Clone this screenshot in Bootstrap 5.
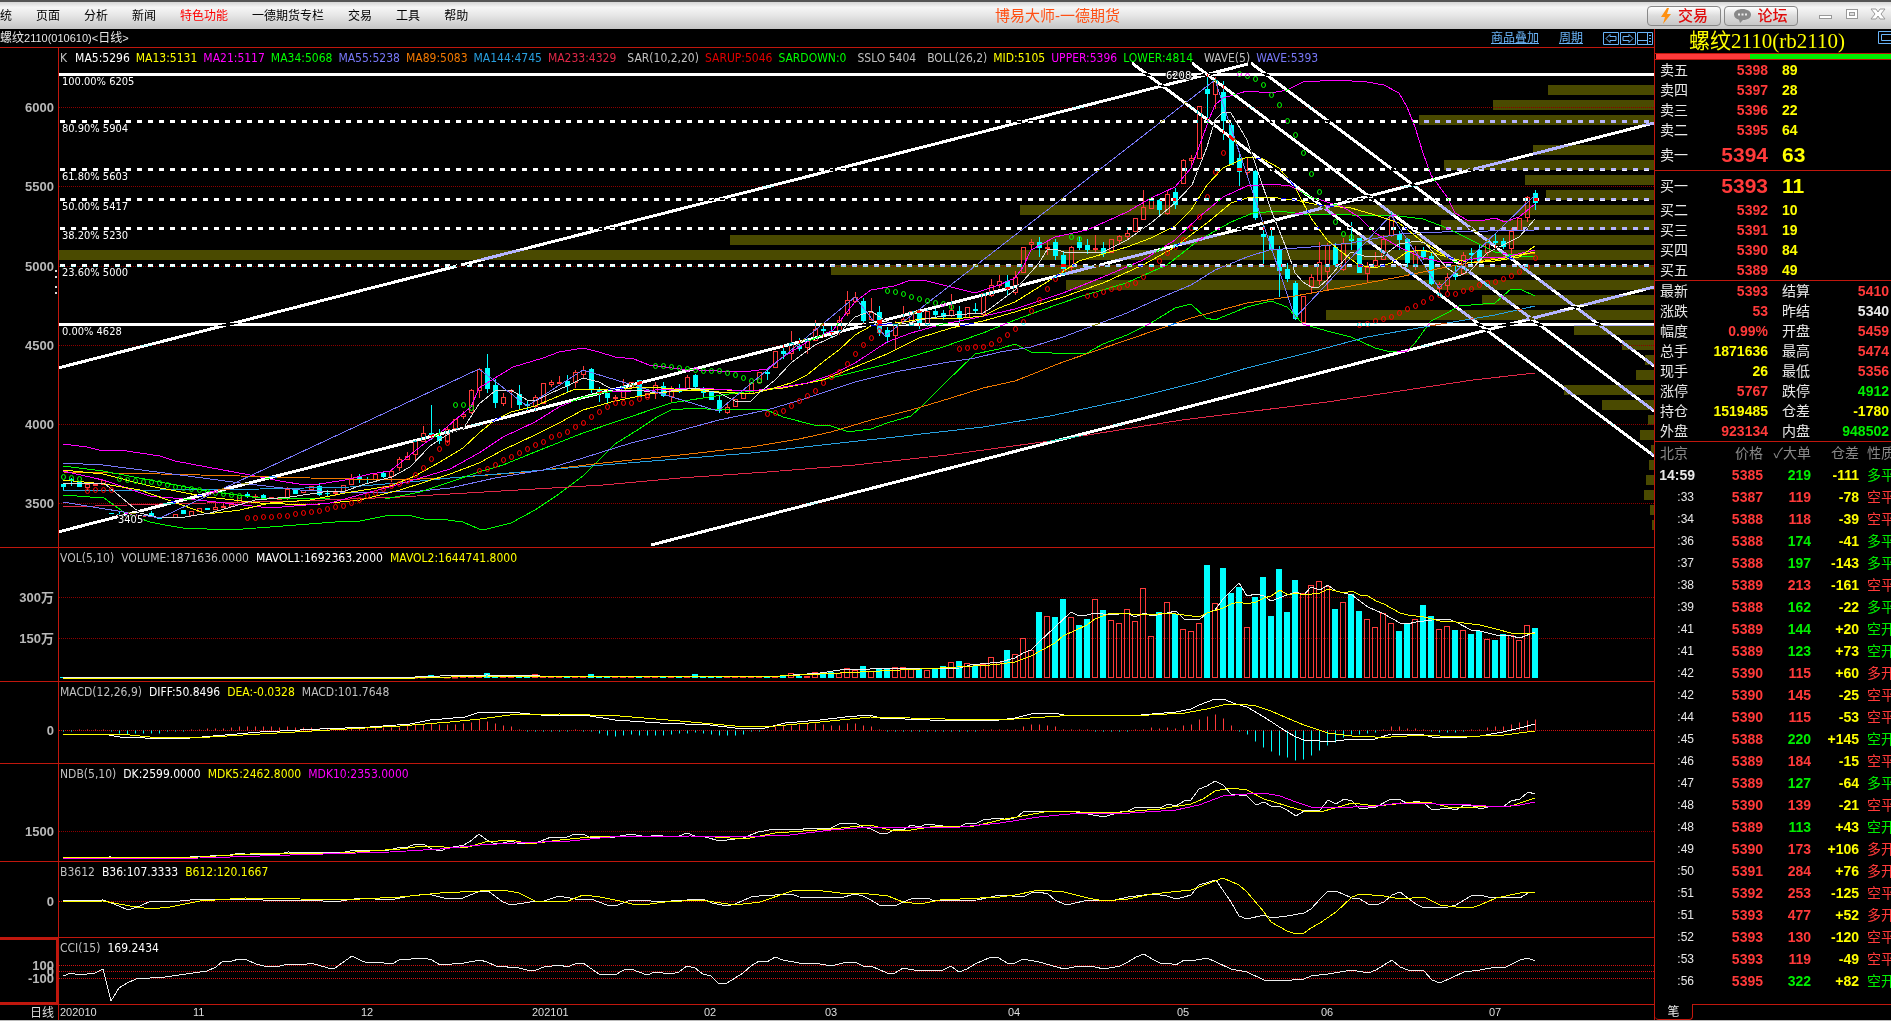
<!DOCTYPE html>
<html lang="zh-CN">
<head>
<meta charset="utf-8">
<meta name="viewport" content="width=device-width, initial-scale=1">
<title>博易大师-一德期货</title>
<link href="https://cdn.jsdelivr.net/npm/bootstrap@5.3.0/dist/css/bootstrap.min.css" rel="stylesheet">
<style>
:root{--line:#c0170d;--up:#ff3a3a;--down:#00ee00;--hot:#ffff00;--pale:#e8e8e8}
body{background:#000;color:var(--pale);font-family:"Liberation Sans","Noto Sans CJK SC",sans-serif;font-size:12px;line-height:16px;overflow:hidden}
a{color:inherit;text-decoration:none}
.topbar{height:29px;border-top:2px solid #555;background:linear-gradient(#d6d6d6 0,#f6f6f6 20%,#e6e6e6 50%,#c4c4c4 100%);color:#000}
.topbar .menu{gap:24px}
.brand-title{color:#ff5014;font-size:15px}
.tool-btn{width:74px;height:20px;padding:0;border:1px solid #888;border-radius:4px;background:linear-gradient(#fff,#dcdcdc 50%,#c8c8c8);color:#e00c0c;font-size:15px;font-weight:500;line-height:18px;gap:6px}
.tool-group{gap:3px}
.win-group{gap:2px;width:93px;padding-left:16px}
.win-group button{border:0;background:none;padding:0;width:24px;height:20px;line-height:0}
.subbar{height:18px}
.subbar .latin{font-size:11px}
.subbar a{color:#6ab4f8;text-decoration:underline}
.nav-icons svg{display:block}
.pane{position:relative;border-top:1px solid var(--line);overflow:hidden}
.pane::after{content:"";position:absolute;left:58px;top:0;bottom:0;width:1px;background:var(--line)}
.pane svg{display:block;width:100%;height:100%}
.legend-row{position:absolute;left:60px;top:2px;gap:7px;font-family:"DejaVu Sans Condensed","DejaVu Sans",sans-serif;font-size:12px;white-space:nowrap;color:#c0c0c0;z-index:1}
.pane-main .legend-row{gap:6px}
.legend-row .grp{margin-left:5px}
.legend-row .lead-key{margin-right:2px}
.axis-num{font:bold 13px "Liberation Sans","Noto Sans CJK SC",sans-serif;fill:#b8b8b8;text-anchor:end}
.fib-num{font:11px "DejaVu Sans Condensed","DejaVu Sans",sans-serif;fill:#fff}
.date-num{font:12px "Liberation Sans","Noto Sans CJK SC",sans-serif;fill:#ddd}
.pane-main{height:500px}.pane-vol{height:134px}.pane-macd{height:82px}.pane-ndb{height:98px}.pane-b36{height:76px}.pane-cci{height:67px}.pane-date{height:16px}
.pane-cci .picked{position:absolute;left:-2px;top:0;width:60px;bottom:0;border:2px solid var(--line)}
.quote-side{width:237px;border-left:1px solid var(--line);overflow:hidden;font-size:14px}
.quote-name{height:24px;color:var(--hot);font:21px/24px "Liberation Serif","Noto Sans CJK SC",serif;padding-left:34px}
.quote-name svg{position:absolute;right:-1px;top:1px}
.force-bar{height:7px;border:solid var(--line);border-width:1px 0;padding-left:1px}
.quote-side table{width:100%;table-layout:fixed;border-collapse:separate;border-spacing:0;line-height:18px}
.quote-side td,.quote-side th{padding:0;white-space:nowrap;overflow:hidden;font-weight:bold}
.quote-side .lbl{font-weight:normal;color:var(--pale);padding-left:5px}
.book tr{height:20px}
.book tr.best{height:30px;font-size:21px}
.book tr.best .lbl{font-size:14px}
.book .sep td{border-top:1px solid var(--line)}
.book tr.fact.sep{height:21px}
.ticks th{border-top:1px solid var(--line);font-weight:normal!important;color:#888;height:23px}
.ticks tbody tr{height:22px}
.ticks td:first-child{font-weight:normal;padding-right:4px;font-size:12px;color:var(--pale)}
.ticks tr.full td:first-child{font-weight:bold;font-size:14px;padding-right:3px}
.ticks .kind{font-weight:normal;padding-left:8px;text-overflow:clip}
.up{color:var(--up)}.dn{color:var(--down)}.hot{color:var(--hot)}.wh{color:#fff}
.tab-strip::after{content:"";flex:1;border-top:1px solid var(--line)}
.tab-strip button{width:38px;height:16px;border:1px solid var(--line);border-top:0;border-left:0;border-radius:0 0 4px 4px;background:#000;color:var(--pale);font-size:12px;line-height:14px;padding:0}
.foot{height:1px;background:#bbb}
</style>
<script src="https://cdn.jsdelivr.net/npm/bootstrap@5.3.0/dist/js/bootstrap.bundle.min.js"></script>
</head>
<body>
<header class="topbar d-flex align-items-center">
  <nav class="menu d-flex">
    <a href="#">统</a><a href="#">页面</a><a href="#">分析</a><a href="#">新闻</a><a href="#" style="color:#f00">特色功能</a><a href="#">一德期货专栏</a><a href="#">交易</a><a href="#">工具</a><a href="#">帮助</a>
  </nav>
  <div class="brand-title mx-auto">博易大师-一德期货</div>
  <div class="tool-group d-flex">
    <button class="tool-btn d-flex align-items-center justify-content-center" type="button"><svg width="12" height="16" viewBox="0 0 12 16"><path d="M7 0 1 9h4L3 16l8-10H7l2-6z" fill="#ff9010"/></svg>交易</button>
    <button class="tool-btn d-flex align-items-center justify-content-center" type="button"><svg width="17" height="15" viewBox="0 0 17 15"><path d="M8.500 1C4 1 0 3.200 0 6.500c0 2.800 2.500 4.500 5 5.200L6 15l3-3c5 0 8-2.300 8-5.500S13 1 8.500 1z" fill="#888"/><path d="M4 5.500h2v2H4zM7.500 5.500h2v2h-2zM11 5.500h2v2h-2z" fill="#eee"/></svg>论坛</button>
  </div>
  <div class="win-group d-flex align-items-start">
    <button type="button" aria-label="最小化"><svg width="14" height="16"><rect x=".5" y="7.500" width="12" height="3" fill="#fff" stroke="#999"/></svg></button>
    <button type="button" aria-label="最大化"><svg width="14" height="16"><rect x="1.500" y="1.500" width="11" height="9" fill="#fff" stroke="#999"/><rect x="4.500" y="4.500" width="5" height="3" fill="#ddd" stroke="#999"/></svg></button>
    <button type="button" aria-label="关闭"><svg width="16" height="16"><path d="M1 1h5l2 3 2-3h5l-4 5 4 5h-5l-2-3-2 3H1l4-5z" fill="#fff" stroke="#999"/></svg></button>
  </div>
</header>
<main class="d-flex">
  <section class="flex-grow-1" style="min-width:0">
    <div class="subbar d-flex align-items-center">
      <span>螺纹<span class="latin">2110(010610)&lt;</span>日线<span class="latin">&gt;</span></span>
      <a class="ms-auto" href="#">商品叠加</a><a class="mx-3 px-1" href="#">周期</a>
      <span class="nav-icons d-flex"><svg width="51" height="15" fill="none" stroke="#6ab4f8"><path d="M.5 1.500h15v12H.5zM17.500 1.500h15v12h-15zM34.500 1.500h15v12h-15z"/><path d="M3 7.500l4-4v2h6v4H7v2zM30 7.500l-4-4v2h-6v4h6v2z"/><path d="M44.500 2v11M35 9.500h9M46 4.500h2M46 7.500h2M46 10.500h2"/></svg></span>
    </div>
    <div class="pane pane-main" id="main"><div class="legend-row d-flex">
      <span class="lead-key">K</span><span class="wh">MA5:5296</span><span class="hot">MA13:5131</span><span style="color:#f0f">MA21:5117</span><span style="color:#0f0">MA34:5068</span><span style="color:#7878f8">MA55:5238</span><span style="color:#f07800">MA89:5083</span><span style="color:#28a0e0">MA144:4745</span><span style="color:#e02848">MA233:4329</span><span class="grp">SAR(10,2,20)</span><span style="color:#e00000">SARUP:5046</span><span style="color:#0f0">SARDOWN:0</span><span class="grp">SSLO 5404</span><span class="grp">BOLL(26,2)</span><span class="hot">MID:5105</span><span style="color:#f0f">UPPER:5396</span><span style="color:#0f0">LOWER:4814</span><span class="grp">WAVE(5)</span><span style="color:#7878f8">WAVE:5393</span>
    </div></div>
    <div class="pane pane-vol" id="vol"><div class="legend-row d-flex"><span>VOL(5,10)</span><span>VOLUME:1871636.0000</span><span class="wh">MAVOL1:1692363.2000</span><span class="hot">MAVOL2:1644741.8000</span></div></div>
    <div class="pane pane-macd" id="macd"><div class="legend-row d-flex"><span>MACD(12,26,9)</span><span class="wh">DIFF:50.8496</span><span class="hot">DEA:-0.0328</span><span>MACD:101.7648</span></div></div>
    <div class="pane pane-ndb" id="ndb"><div class="legend-row d-flex"><span>NDB(5,10)</span><span class="wh">DK:2599.0000</span><span class="hot">MDK5:2462.8000</span><span style="color:#f0f">MDK10:2353.0000</span></div></div>
    <div class="pane pane-b36" id="b36"><div class="legend-row d-flex"><span>B3612</span><span class="wh">B36:107.3333</span><span class="hot">B612:120.1667</span></div></div>
    <div class="pane pane-cci" id="cci"><div class="picked"></div><div class="legend-row d-flex"><span>CCI(15)</span><span class="wh">169.2434</span></div></div>
    <div class="pane pane-date" id="dates"></div>
  </section>
  <aside class="quote-side flex-shrink-0 d-flex flex-column">
    <div class="quote-name position-relative">螺纹2110(rb2110)<svg width="14" height="15" fill="none" stroke="#6ab4f8"><path d="M14 1.500H.5v12H14M14 4.500H3.500v6H14"/></svg></div>
    <div class="force-bar d-flex"><div style="width:40%;background:var(--up)"></div><div class="flex-grow-1" style="background:var(--down)"></div></div>
    <table class="book" id="book"><colgroup><col style="width:44px"><col style="width:69px"><col style="width:48px"><col></colgroup><tbody></tbody></table>
    <table class="ticks" id="ticks"><colgroup><col style="width:43px"><col style="width:65px"><col style="width:48px"><col style="width:48px"><col></colgroup><thead><tr><th class="lbl" style="color:#888">北京</th><th class="text-end">价格</th><th class="text-end">✓大单</th><th class="text-end">仓差</th><th class="kind">性质</th></tr></thead><tbody></tbody></table>
    <div class="tab-strip d-flex mt-auto"><button type="button">笔</button></div>
  </aside>
</main>
<div class="foot"></div>
<script>
// order book and quote summary
const asks=[['卖五',5398,89],['卖四',5397,28],['卖三',5396,22],['卖二',5395,64],['卖一',5394,63]];
const bids=[['买一',5393,11],['买二',5392,10],['买三',5391,19],['买四',5390,84],['买五',5389,49]];
const facts=[['最新','5393','up','结算','5410','up'],['涨跌','53','up','昨结','5340',''],['幅度','0.99%','up','开盘','5459','up'],['总手','1871636','hot','最高','5474','up'],['现手','26','hot','最低','5356','up'],['涨停','5767','up','跌停','4912','dn'],['持仓','1519485','hot','仓差','-1780','hot'],['外盘','923134','up','内盘','948502','dn']];
const level=(r,best,sep)=>`<tr class="${best?'best':''} ${sep?'sep':''}"><td class="lbl">${r[0]}</td><td class="up text-end">${r[1]}</td><td class="hot" style="padding-left:14px" colspan="2">${r[2]}</td></tr>`;
document.querySelector('#book tbody').innerHTML=
  asks.map((r,i)=>level(r,i==4)).join('')+bids.map((r,i)=>level(r,i==0,i==0)).join('')+
  facts.map((f,i)=>`<tr class="fact ${i?'':'sep'}"><td class="lbl">${f[0]}</td><td class="text-end ${f[2]}">${f[1]}</td><td class="lbl" style="padding-left:14px">${f[3]}</td><td class="text-end ${f[5]}" style="padding-right:2px">${f[4]}</td></tr>`).join('');
// trade ticks: time, price, lots, colour, open interest change, kind
const tk=`14:59 5385 219 g -111 多平 g|:33 5387 119 r -78 空平 r|:34 5388 118 r -39 空平 r|:36 5388 174 g -41 多平 g|:37 5388 197 g -143 多平 g|:38 5389 213 r -161 空平 r|:39 5388 162 g -22 多平 g|:41 5389 144 g +20 空开 g|:41 5389 123 g +73 空开 g|:42 5390 115 r +60 多开 r|:42 5390 145 r -25 空平 r|:44 5390 115 r -53 空平 r|:45 5388 220 g +145 空开 g|:46 5389 184 r -15 空平 r|:47 5389 127 g -64 多平 g|:48 5390 139 r -21 空平 r|:48 5389 113 g +43 空开 g|:49 5390 173 r +106 多开 r|:50 5391 284 r +76 多开 r|:51 5392 253 r -125 空平 r|:51 5393 477 r +52 多开 r|:52 5393 130 r -120 空平 r|:53 5393 119 r -49 空平 r|:56 5395 322 g +82 空开 g`;
const cl={g:'dn',r:'up'};
document.querySelector('#ticks tbody').innerHTML=tk.split('|').map((s,i)=>{const t=s.split(' ');return `<tr class="${i?'':'full'}"><td class="text-end">${t[0]}</td><td class="text-end up">${t[1]}</td><td class="text-end ${cl[t[3]]}">${t[2]}</td><td class="text-end hot">${t[4]}</td><td class="kind ${cl[t[6]]}">${t[5]}</td></tr>`}).join('');

// chart helpers
const X=i=>63+8*i;
const pl=(pts,c,w=1)=>`<polyline points="${pts}" fill="none" stroke="${c}" stroke-width="${w}" shape-rendering="crispEdges"/>`;
const grid=(y,c='#8c0000')=>`<path d="M59 ${y}.5H2600" stroke="${c}" stroke-dasharray="1 1" shape-rendering="crispEdges"/>`;
const num=(y,t,cls='axis-num',x=54)=>`<text class="${cls}" x="${x}" y="${y+5}">${t}</text>`;
function put(id,top,body){document.getElementById(id).insertAdjacentHTML('afterbegin',`<svg><g transform="translate(0 ${-top-1})">${body}</g></svg>`)}

// candles: top, bottom, kind, high, low
const candles=`484 487 c 483 490|479 481 c 478 486|482 487 c|484 487 r 482 490|484 485 r|480 484 r|513 514 c|514 516 c 511 517|515 516 r|515 516 r|515 516 r|513 516 c 511 517|517 519 c|517 518 c|514 517 r|510 514 c|511 515 r|508 511 r|508 510 c|507 509 r 503 510|506 507 r 502 508|504 506 r|495 502 r|494 497 c 492 498|496 497 r 494 499|495 498 c 494 500|497 498 r|497 499 r|489 497 r 487 500|489 494 c|490 492 r|486 489 r|486 495 c 483 496|493 494 c 490 496|492 493 r 489 496|485 492 r|478 484 r 474 485|477 480 c 474 483|479 480 c 477 483|474 479 r|473 477 c 471 478|471 476 r 470 482|459 467 r 457 471|456 459 r 452 460|441 454 r 440 460|433 441 r 426 442|433 436 c 405 440|436 441 c 429 444|429 441 r 427 443|419 428 r|414 416 r 411 419|390 412 r 389 414|369 390 r 368 398|368 389 c 354 393|385 403 c 379 408|397 403 r 393 406|390 391 r 389 408|394 405 c 385 409|404 406 c 401 411|397 406 r 395 412|383 403 r|382 384 r 380 387|382 383 r 376 384|381 386 c 375 393|372 382 r 370 388|370 374 r 366 378|369 390 c 368 393|390 393 c 387 402|393 398 c 390 404|397 398 r 395 400|386 397 r 379 398|382 387 r|380 397 c|393 397 r|385 393 r 382 399|386 396 c 382 397|390 396 r 386 402|389 392 c 384 393|377 388 r 375 390|375 387 c 374 390|390 393 c 387 398|392 400 c|400 411 c 396 413|407 412 r 402 414|399 406 r|393 398 r|383 393 r|372 382 r|372 374 c 370 380|351 367 r|351 354 c 345 359|343 353 r 331 360|346 349 c 338 351|340 347 r 338 354|329 340 r 320 341|329 331 c 323 337|331 333 c 326 338|320 330 r 316 335|300 313 r 291 316|297 301 r 292 303|301 321 c 298 324|312 319 r 298 321|312 333 c 306 336|330 337 c 327 343|324 335 r 321 350|319 321 r 306 323|311 325 r|311 323 c 309 329|311 324 r 309 327|311 315 c 309 319|313 317 c 310 320|310 315 r 294 317|311 318 c 306 326|307 317 r|309 311 c 303 313|293 314 r|285 295 r 279 297|281 285 r 275 288|281 289 c 275 296|277 292 r 271 295|247 272 r|242 244 r 239 250|242 248 c 237 257|247 248 r 240 255|242 256 c 239 260|255 269 c 252 271|247 267 r 246 271|242 248 c 237 250|245 250 c 239 254|248 249 r 235 253|248 254 c 242 257|239 252 r|236 240 r 235 245|233 236 r 228 239|218 231 r|207 219 r 190 220|200 208 r|200 210 c 199 217|194 213 r 191 215|192 205 c 188 209|160 183 r 159 184|158 160 r 155 166|106 158 r|89 94 c 74 122|80 94 r 77 109|92 121 c 81 140|125 165 c 123 165|158 172 c 153 186|170 172 r 158 175|171 218 c 170 220|234 237 c 222 265|236 249 c 228 251|250 271 c 246 297|269 279 c 263 282|283 319 c 281 320|296 322 r|277 286 r 274 294|262 280 r 242 285|245 271 r 243 290|247 265 c 243 267|243 269 r 238 271|239 241 c 222 250|238 273 c|267 273 r 262 282|260 265 r 252 268|239 259 r 235 260|216 235 r 212 237|234 240 c 231 250|239 263 c 238 267|250 264 r 246 270|251 257 c 247 260|256 284 c 252 285|284 288 r 282 296|277 285 r 273 292|273 277 c 266 280|255 273 r 252 275|253 255 c 248 264|250 261 c 244 263|242 252 r 238 256|241 243 c 234 248|241 247 c 238 249|231 248 r 228 254|218 230 r|197 217 r 196 222|193 203 c 190 210`.split('|').map(s=>{const a=s.split(' ');return{t:+a[0],b:+a[1],c:a[2],h:+(a[3]||a[0]),l:+(a[4]||a[1])}});
let m='';
[[85,1548],[100,1493],[115,1419],[145,1533],[160,1444],[175,1525],[190,1546],[205,1020],[220,1441],[235,730],[250,59],[265,831],[280,1066],[295,1482],[310,1326],[325,1574],[340,1622],[355,1645],[370,1636],[385,1564],[400,1602],[415,1648],[430,1640],[445,1651],[460,1649],[475,1646],[490,1644],[505,1650],[520,1652]].forEach(([y,x])=>m+=`<rect x="${x}" y="${y}" width="${1654-x}" height="10" fill="#4a4a00"/>`);
[[107,6000],[186,5500],[266,5000],[345,4500],[424,4000],[503,3500]].forEach(([y,t])=>m+=grid(y)+num(y,t));
m+='<path d="M56 270v12M56 286v8" stroke="#ddd" stroke-width="2" stroke-dasharray="2 4"/>';
candles.forEach((k,i)=>{const x=X(i);
  m+=k.c=='c'?`<path d="M${x+.5} ${k.h}V${k.l}" stroke="#0ff"/><rect x="${x-2}" y="${k.t}" width="5" height="${Math.max(1,k.b-k.t)}" fill="#0ff"/>`
  :`<path d="M${x+.5} ${k.h}V${k.t}M${x+.5} ${k.b}V${k.l}" stroke="#ff3a3a"/><rect x="${x-1.5}" y="${k.t+.5}" width="4" height="${Math.max(.5,k.b-k.t)}" fill="none" stroke="#ff3a3a"/>`});
m+=pl('63,444 87,447 103,451 120,450 160,456 175,461 207,467 250,475 280,481 305,485 320,484 345,480 370,474 390,471 405,459 425,443 440,433 455,420 471,407 479,388 495,378 513,367 543,358 559,352 583,348 599,352 615,357 634,359 649,365 680,369 718,371 751,371 767,369 783,357 807,342 833,330 847,312 855,302 871,290 894,286 911,280 927,281 951,287 975,293 999,285 1015,278 1023,267 1031,250 1055,237 1087,230 1127,212 1151,198 1175,187 1191,168 1199,147 1210,117 1215,105 1223,98 1247,91 1271,93 1287,90 1303,82 1337,80 1367,82 1384,85 1399,93 1407,107 1415,127 1423,153 1431,175 1447,197 1455,213 1467,220 1480,221 1495,218 1505,222 1519,217 1535,204','#f0f');
m+=pl('63,495 104,498 125,513 150,522 165,525 183,528 230,530 270,527 335,522 360,521 390,515 408,515 424,519 440,519 463,522 479,529 487,529 511,523 535,510 559,494 583,476 615,444 639,429 657,417 671,410 695,408 719,410 745,409 767,410 783,417 814,425 831,426 846,431 855,431 871,429 887,423 911,416 921,407 943,385 975,354 999,349 1015,344 1031,352 1072,354 1087,353 1103,344 1127,335 1151,323 1175,308 1191,304 1206,318 1215,320 1247,307 1271,301 1287,307 1303,324 1327,331 1351,337 1375,348 1391,352 1407,351 1415,343 1431,321 1447,313 1459,306 1495,303 1511,289 1522,290 1535,296','#0f0');
m+=pl('63,472 160,474 240,476 310,478 390,480 450,478 527,472 603,463 680,455 751,447 799,439 831,432 871,420 911,410 951,398 983,388 1015,381 1063,362 1127,340 1191,318 1247,303 1295,296 1351,286 1399,277 1447,267 1495,258 1535,253','#f07800');
m+=pl('63,490 160,490 260,489 350,487 420,481 450,478 603,465 751,453 831,444 895,437 983,427 1050,416 1130,399 1206,380 1247,368 1311,352 1367,337 1447,323 1495,315 1535,306','#28a0e0');
m+=pl('63,507 160,504 300,501 400,497 450,494 603,485 680,478 767,472 855,465 947,455 1050,441 1182,420 1327,402 1473,380 1535,373','#e02848');
m+=pl('63,463 103,465 180,475 240,483 300,490 360,493 420,491 450,488 495,478 543,470 583,458 631,443 671,433 719,420 767,410 807,398 855,382 895,372 943,363 975,358 1000,352 1031,347 1063,337 1095,325 1127,313 1160,298 1191,285 1215,270 1247,257 1269,250 1311,247 1351,243 1399,234 1442,232 1535,230','#7878f8');
m+=pl('63,466 103,471 160,482 207,491 260,498 330,499 385,499 420,492 450,482 479,472 503,465 535,452 583,433 615,422 671,403 735,393 783,388 831,378 887,364 943,347 983,333 1015,320 1042,310 1079,297 1126,283 1167,265 1199,240 1231,222 1253,213 1279,211 1303,214 1399,216 1423,219 1447,228 1471,240 1495,252 1519,256 1535,256','#0f0');
m+=pl('63,470 103,474 150,486 207,497 260,503 310,505 360,500 400,490 450,474 479,463 503,450 535,435 559,423 583,410 615,401 655,393 703,389 751,391 783,388 823,380 855,367 887,354 919,338 951,328 983,321 1015,312 1063,297 1103,283 1143,265 1175,247 1207,223 1231,203 1247,198 1269,197 1295,200 1319,205 1351,208 1375,215 1399,223 1423,242 1447,257 1471,263 1505,258 1535,252','#ff0');
m+=pl('63,471 103,480 150,496 207,501 270,508 330,503 400,484 450,469 479,453 503,437 535,422 559,407 583,397 607,392 655,390 695,388 751,391 783,387 807,383 831,375 855,363 887,342 911,333 943,324 975,318 1015,309 1063,293 1103,277 1143,260 1175,240 1199,217 1223,197 1247,186 1271,184 1290,186 1311,197 1343,207 1359,217 1375,233 1399,247 1423,258 1447,263 1479,258 1505,257 1535,250','#f0f');
m+=pl('63,480 104,484 140,490 207,514 240,510 270,503 310,500 345,493 390,486 415,476 440,462 463,448 479,433 495,420 511,412 535,406 559,396 575,389 615,389 649,387 687,390 719,392 751,394 767,390 791,383 807,375 823,362 839,350 855,335 871,326 903,322 927,318 963,318 983,316 999,308 1015,302 1047,282 1055,277 1079,261 1103,254 1127,247 1151,238 1175,226 1191,210 1207,185 1223,168 1247,157 1263,159 1279,168 1295,187 1311,218 1327,240 1343,253 1359,265 1375,268 1391,263 1407,252 1423,250 1447,257 1471,263 1495,261 1519,257 1535,246','#ff0');
m+=pl('63,484 104,483 140,513 160,518 185,517 210,513 235,506 255,500 290,497 330,491 345,491 365,484 392,477 410,467 430,446 450,433 463,429 479,404 495,391 511,390 527,400 535,401 551,393 567,386 583,378 599,382 615,391 639,390 655,393 695,388 719,393 735,401 751,401 759,393 775,380 791,363 815,345 837,335 855,317 871,311 887,322 903,325 919,320 943,316 967,314 983,313 991,308 1015,290 1039,263 1047,250 1055,249 1067,253 1103,252 1127,240 1151,223 1175,203 1192,185 1207,147 1215,120 1223,112 1231,113 1247,140 1255,163 1271,210 1287,250 1295,273 1303,282 1311,287 1319,287 1327,280 1351,252 1367,257 1383,256 1399,244 1417,241 1425,243 1431,250 1447,268 1459,276 1471,270 1487,253 1503,245 1519,237 1535,219','#ddd');
m+=pl('63,502 160,518 479,369 527,406 583,370 718,411 855,297 885,336 1215,80 1295,318 1391,215 1439,288 1535,195','#7878f8');
// parabolic SAR dots: first candle index, then one y value per candle
const sar=(c,s)=>s.forEach(([i,...ys])=>ys.forEach((y,k)=>m+=`<ellipse cx="${X(i+k)+.5}" cy="${y}" rx="2" ry="2.500" fill="none" stroke="${c}"/>`));
sar('#f00',[[3,491,490,490,490],[23,518,518,517,517,516,516,514,513,512,511,509,507,506,503,500,496,493,489,486,484,481,475,468,459,449,443],[52,471,469,465,460,457,453,449,445,442,437,435,432,427,423,417,412,407,403,403,403,399,397],[88,414,413,411,406,401,396,391,383,377,372,364,354,345,338,331],[112,349,348,347,347,344,340,335,329,322,311,300,289,279,272],[128,296,295,292,289,288,285,283,277,268,261,253,247,240,228,217,197,172,153],[162,325,324,321,319,317,313,309,306,302,298,295,294,294,291,289,285,283,282,279,276,272,267,258]]);
sar('#0f0',[[0,477,478,479],[7,479,480,481,482,482,483,485,487,488,489,490,492,493,494,495,496],[49,405,405,408],[74,366,366,367,368,369,370,371,371,371,373,375,378,381,381],[103,291,292,294,297,299,301,303,304,307],[126,237,239],[147,74,76,79,85,95,105,121,135,153,174,192,208,222,234,237]]);
// drawn studies invert what lies under them
const inv=(d,extra='')=>`<path d="${d}" stroke="#fff" stroke-width="3" fill="none" shape-rendering="crispEdges" style="mix-blend-mode:difference" ${extra}/>`;
m+=inv('M58 368 1248 64')+inv('M58 532 1654 123')+inv('M651 545 1654 287')+inv('M1132 63 1654 456')+inv('M1192 63 1654 411')+inv('M1251 63 1654 366');
m+=inv('M58 74.500H2600')+inv('M58 324.500H2600');
[121,169,199,228,265].forEach(y=>m+=inv(`M60 ${y}.5H2600`,'stroke-dasharray="5 6"'));
[[81,'100.00% 6205'],[128,'80.90% 5904'],[176,'61.80% 5603'],[206,'50.00% 5417'],[235,'38.20% 5230'],[272,'23.60% 5000'],[331,'0.00% 4628']].forEach(([y,t])=>m+=`<text class="fib-num" x="62" y="${y+4}">${t}</text>`);
m+='<g style="paint-order:stroke" stroke="#000" stroke-width="2"><text class="fib-num" x="1166" y="79">6208</text><text class="fib-num" x="118" y="523">3405</text></g>';
put('main',47,m);

// volume bars share the candle colours
const late=[668,670,666,671,668,669,667,667,669,669,670,668,666,662,661,663,666,664,657,662,650,654,638,650,612,616,617,599,617,625,619,599,610,620,623,609,621,588,636,612,602,614,629,631,623,565,603,568,593,587,627,597,577,616,569,612,580,593,585,581,586,609,602,594,611,619,627,613,623,631,624,619,605,616,629,626,630,630,634,631,639,640,634,635,640,625,628];
const special={46:675,53:673,54:675,59:674,66:674,79:674,91:673,94:672,95:673,96:672,97:673};
let v=grid(597)+grid(638)+num(597,'300万')+num(638,'150万');
candles.forEach((k,i)=>{const y=i>=98?late[i-98]:(special[i]||(i<50?677:676)),x=X(i);
  v+=k.c=='c'?`<rect x="${x-3}" y="${y}" width="6" height="${678-y}" fill="#0ff"/>`:`<rect x="${x-2.5}" y="${y+.5}" width="5" height="${Math.max(.5,677-y)}" fill="none" stroke="#ff3a3a"/>`});
v+=pl('63,677 415,677 440,676 487,675 540,676 650,676 780,676 820,673 840,670 870,669 960,668 970,665 1000,662 1015,658 1023,653 1031,650 1039,642 1055,627 1071,612 1079,616 1087,615 1095,613 1111,615 1127,613 1135,617 1144,613 1152,616 1167,613 1176,611 1184,619 1199,620 1207,613 1215,610 1223,599 1239,583 1247,596 1256,594 1264,596 1271,601 1287,595 1296,592 1304,595 1311,587 1320,590 1328,585 1336,591 1352,595 1368,607 1384,614 1400,623 1407,624 1416,622 1432,620 1448,619 1456,622 1471,630 1480,631 1496,635 1511,636 1520,638 1535,632','#eee');
v+=pl('63,678 415,678 487,676 600,676 780,676 840,673 880,671 940,668 990,665 1000,664 1015,662 1031,656 1055,643 1063,636 1087,625 1095,619 1111,613 1150,615 1167,613 1184,615 1199,617 1207,613 1223,608 1231,604 1239,602 1247,604 1256,602 1264,598 1271,596 1280,590 1288,595 1296,593 1304,595 1320,593 1328,589 1344,593 1352,591 1360,595 1368,596 1376,601 1384,604 1400,613 1408,615 1424,617 1440,621 1456,622 1480,625 1496,629 1511,633 1535,634','#ff0');
put('vol',547,v);

// MACD histogram, one value per candle
const hist=[-1,-1,1,1,1,1,-1,-3,-4,-3,-3,-3,-3,-1,-1,-1,1,1,2,2,2,3,4,4,4,4,4,3,4,3,3,3,2,2,2,2,2,2,3,3,3,3,3,5,6,6,7,6,6,6,7,8,11,9,7,5,4,1,-1,-1,-1,-1,-1,-1,1,-1,-1,-3,-5,-6,-5,-4,-5,-5,-5,-5,-4,-3,-3,-2,-3,-4,-5,-5,-5,-4,-1,-1,1,4,5,5,6,7,7,6,5,5,7,7,5,4,1,-1,-1,-1,-1,-1,-1,-1,-1,-1,-1,-1,-1,1,1,1,1,1,4,6,6,5,4,1,1,1,1,-1,-1,-1,-1,-1,1,1,3,2,3,2,5,6,11,14,16,12,5,-1,-4,-11,-17,-21,-25,-27,-30,-29,-25,-20,-15,-12,-7,-4,-4,-3,-2,1,4,4,2,2,1,-1,-2,-2,-2,-1,1,1,3,4,4,6,8,10,11];
const red='#d01010';
let c=grid(730,red)+num(730,'0');
hist.forEach((h,i)=>c+=`<path d="M${X(i)+.5} 730.500V${730.5-h}" stroke="${h>0?'#ff3a3a':'#0ff'}"/>`);
c+=pl('63,734 103,734 120,737 145,738 190,738 225,735 260,732 320,729 370,727 410,724 430,720 465,717 480,712 510,712 540,715 590,716 615,720 660,723 710,725 735,728 765,728 785,723 820,720 845,717 870,715 880,718 930,720 960,721 1000,720 1015,718 1031,714 1054,713 1064,715 1129,716 1176,712 1191,709 1199,705 1215,699 1223,699 1236,704 1247,707 1264,717 1287,732 1296,737 1304,740 1320,741 1336,741 1352,739 1375,739 1391,734 1424,735 1432,737 1455,738 1480,736 1503,732 1520,728 1535,724','#fff');
c+=pl('63,734 120,734 150,737 210,737 260,734 330,730 400,726 450,722 480,719 510,715 560,714 620,716 680,721 735,726 775,726 820,722 870,717 910,718 980,720 1015,719 1060,716 1150,715 1185,713 1207,709 1223,705 1239,704 1256,706 1271,711 1287,718 1304,725 1328,733 1352,736 1375,737 1391,737 1424,735 1440,736 1480,736 1504,735 1535,731','#ff0');
put('macd',681,c);

c=grid(831)+num(831,'1500');
c+=pl('63,858 75,858 110,857 145,858 190,857 230,855 240,853 250,855 280,854 288,852 340,853 350,851 390,850 400,847 408,847 415,844 423,844 432,849 440,851 448,848 464,845 472,840 479,834 487,840 495,844 503,843 511,841 520,844 536,843 551,837 567,837 575,834 583,834 591,838 615,837 631,834 647,837 655,835 663,836 679,836 687,833 695,836 705,837 720,841 727,840 743,838 758,832 775,829 800,830 807,828 831,828 839,824 855,823 863,827 871,829 879,833 888,833 895,829 903,830 911,825 919,827 927,824 951,827 959,827 967,823 975,824 983,820 1000,818 1007,820 1017,817 1023,812 1040,811 1063,812 1071,811 1104,817 1120,812 1128,811 1136,807 1160,808 1168,804 1176,806 1184,801 1191,800 1199,789 1207,786 1215,781 1223,785 1231,794 1247,796 1256,805 1264,802 1271,806 1279,806 1287,810 1296,816 1304,811 1320,810 1328,800 1336,804 1344,799 1352,801 1360,809 1376,807 1391,799 1399,799 1408,804 1416,801 1424,803 1432,810 1448,808 1456,810 1464,805 1471,805 1480,809 1488,807 1504,806 1511,801 1520,799 1528,792 1535,794','#eee');
c+=pl('63,858 200,857 250,854 340,853 400,849 423,846 465,848 485,842 511,840 530,844 560,840 590,837 650,836 700,836 745,839 775,833 831,829 870,825 890,830 911,830 930,827 975,826 1000,820 1050,811 1110,813 1160,809 1191,804 1203,799 1215,791 1231,788 1247,790 1264,799 1287,806 1304,811 1320,812 1335,808 1352,803 1376,806 1416,802 1432,803 1448,807 1464,808 1488,806 1511,806 1535,798','#ff0');
c+=pl('63,859 200,858 290,855 390,852 440,849 480,845 515,843 570,841 610,837 690,836 740,837 790,835 831,830 870,827 950,828 1000,823 1039,817 1080,813 1130,813 1176,810 1199,805 1223,796 1247,794 1264,793 1280,796 1296,802 1311,807 1330,808 1376,806 1400,803 1471,805 1500,807 1520,805 1535,802','#f0f');
put('ndb',763,c);

c=grid(901,red)+num(901,'0');
c+=pl('63,901 103,900 119,906 128,910 140,906 151,901 170,902 200,899 245,899 280,901 310,900 335,902 360,898 390,900 410,896 428,894 448,899 463,898 480,891 488,891 503,902 511,905 530,902 544,901 559,896 575,899 591,899 607,905 615,906 631,900 647,900 655,902 703,899 712,903 727,906 735,904 751,897 759,896 792,894 799,897 840,898 855,894 863,896 871,900 879,905 895,906 903,902 911,899 927,898 935,901 977,900 1000,895 1023,897 1031,893 1039,892 1048,894 1055,900 1064,904 1071,904 1088,900 1111,901 1128,897 1152,894 1167,896 1176,899 1184,897 1191,895 1199,885 1216,880 1231,902 1239,916 1247,919 1264,915 1271,918 1287,916 1304,913 1311,909 1320,899 1328,891 1336,891 1352,898 1360,899 1368,904 1376,905 1384,902 1392,895 1400,892 1408,898 1416,904 1424,908 1448,907 1456,905 1471,896 1480,895 1488,897 1520,898 1528,893 1535,892','#eee');
c+=pl('63,902 103,901 130,906 151,909 170,907 200,901 245,898 300,899 340,900 400,897 440,893 480,891 503,890 519,893 535,901 560,902 568,901 583,895 600,897 620,901 632,904 650,904 665,902 700,900 735,905 760,902 792,891 815,890 840,893 860,893 888,896 903,902 920,904 940,900 1000,897 1015,895 1039,890 1064,892 1088,898 1104,901 1128,899 1152,894 1191,890 1207,884 1223,878 1239,885 1247,892 1264,912 1271,922 1287,931 1296,934 1304,933 1311,928 1320,923 1336,912 1352,897 1360,894 1384,896 1400,899 1424,897 1432,901 1440,905 1456,907 1471,908 1480,905 1496,898 1520,893 1535,892','#ff0');
put('b36',861,c);

c=grid(965,red)+grid(971,red)+grid(978,red)+num(965,'100')+num(971,'0')+num(978,'-100');
c+=pl('63,976 71,973 79,975 95,973 103,969 111,1001 119,988 127,983 136,979 165,977 207,971 216,967 223,961 232,961 239,959 247,960 256,964 264,966 280,966 288,964 303,965 311,963 328,968 335,968 352,956 360,960 367,963 376,962 392,964 399,960 424,958 432,960 440,965 464,963 480,960 487,962 496,966 519,968 527,970 536,970 544,967 560,965 567,967 575,964 583,963 599,974 615,975 624,970 631,969 647,975 655,972 671,974 679,972 687,966 695,968 703,974 711,976 719,984 727,983 743,973 751,966 759,961 767,962 775,957 783,960 799,963 815,963 831,966 847,962 855,962 863,966 871,966 887,973 895,973 903,968 919,971 943,970 951,966 959,972 967,969 975,964 991,957 999,958 1007,963 1015,963 1023,959 1039,962 1064,969 1079,966 1095,967 1104,969 1120,966 1128,962 1136,957 1144,954 1152,959 1160,963 1168,963 1176,965 1184,960 1191,961 1207,958 1216,962 1231,969 1247,972 1264,980 1280,981 1304,979 1311,976 1328,974 1352,970 1368,973 1376,970 1392,960 1400,967 1408,970 1424,971 1432,980 1440,983 1464,972 1480,970 1496,967 1504,968 1520,960 1528,958 1535,961','#eee');
put('cci',937,c);

c='<text class="date-num" x="54" y="1017" text-anchor="end">日线</text>';
[[60,'202010'],[193,'11'],[361,'12'],[532,'202101'],[704,'02'],[825,'03'],[1008,'04'],[1177,'05'],[1321,'06'],[1489,'07']].forEach(([x,t])=>c+=`<text class="date-num" style="font-size:11px" x="${x}" y="1016">${t}</text>`);
put('dates',1004,c);
</script>
</body>
</html>
